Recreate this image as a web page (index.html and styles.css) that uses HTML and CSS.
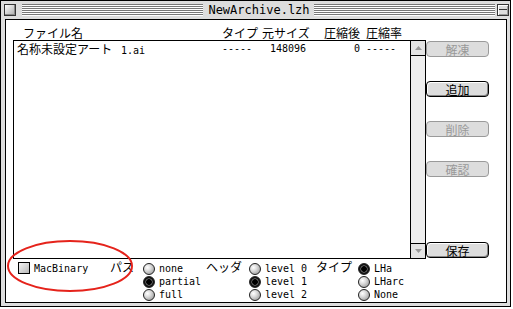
FILE: index.html
```html
<!DOCTYPE html>
<html lang="ja">
<head>
<meta charset="UTF-8">
<meta name="viewport" content="width=device-width, initial-scale=1.0">
<title>NewArchive.lzh</title>
<link rel="stylesheet" href="styles.css">
</head>
<body>
<div class="window">
  <div class="titlebar">
    <span class="closebox"></span>
    <span class="stripes"></span>
    <span class="title">NewArchive.lzh</span>
    <span class="stripes"></span>
    <span class="zoombox"></span>
  </div>

  <div class="content">
    <div class="cols header">
      <span>ファイル名</span>
      <span>タイプ</span>
      <span>元サイズ</span>
      <span>圧縮後</span>
      <span>圧縮率</span>
    </div>

    <div class="main">
      <div class="listbox">
        <div class="list">
          <div class="cols row">
            <span>名称未設定アート <span class="mono">1.ai</span></span>
            <span class="mono">-----</span>
            <span class="mono num">148096</span>
            <span class="mono num">0</span>
            <span class="mono">-----</span>
          </div>
        </div>
        <div class="scrollbar">
          <div class="arrow up">
            <svg width="7" height="4" viewBox="0 0 7 4"><polygon points="3.5,0 7,4 0,4" fill="#999"/></svg>
          </div>
          <div class="track"></div>
          <div class="arrow down">
            <svg width="7" height="4" viewBox="0 0 7 4"><polygon points="0,0 7,0 3.5,4" fill="#999"/></svg>
          </div>
        </div>
      </div>

      <div class="buttons">
        <button class="btn" disabled>解凍</button>
        <button class="btn">追加</button>
        <button class="btn" disabled>削除</button>
        <button class="btn" disabled>確認</button>
        <button class="btn last">保存</button>
      </div>
    </div>

    <div class="options">
      <label class="check"><span class="box"></span><span class="mono">MacBinary</span></label>

      <span class="group-label">パス</span>
      <div class="radios">
        <div class="radio"><span class="dot"></span><span class="mono">none</span></div>
        <div class="radio"><span class="dot on"></span><span class="mono">partial</span></div>
        <div class="radio"><span class="dot"></span><span class="mono">full</span></div>
      </div>

      <span class="group-label">ヘッダ</span>
      <div class="radios">
        <div class="radio"><span class="dot"></span><span class="mono">level 0</span></div>
        <div class="radio"><span class="dot on"></span><span class="mono">level 1</span></div>
        <div class="radio"><span class="dot"></span><span class="mono">level 2</span></div>
      </div>

      <span class="group-label">タイプ</span>
      <div class="radios">
        <div class="radio"><span class="dot on"></span><span class="mono">LHa</span></div>
        <div class="radio"><span class="dot"></span><span class="mono">LHarc</span></div>
        <div class="radio"><span class="dot"></span><span class="mono">None</span></div>
      </div>
    </div>
  </div>

  <!-- red mark drawn over the window -->
  <svg class="mark" width="130" height="56" viewBox="0 0 130 56">
    <ellipse cx="64" cy="27" rx="62" ry="25" fill="none" stroke="#e5231b" stroke-width="2"/>
  </svg>
</div>
</body>
</html>
```

FILE: styles.css
```css
body {
  margin: 0;
  background: #fff;
  font-family: "Noto Sans CJK JP", sans-serif;
  font-size: 12px;
  color: #000;
}
.mono {
  font-family: "DejaVu Sans Mono", monospace;
  font-size: 10px;
}
.window {
  position: relative; /* para la marca roja */
  box-sizing: border-box;
  width: 511px;
  height: 307px;
  border: 1px solid #000;
  background: #dddddd;
  padding: 0 3px 3px 4px;
}

/* barra de titulo */
.titlebar {
  display: flex;
  align-items: flex-start;
  height: 18px;
  margin: 0 -2px 0 -1px;
  padding: 3px 0 0 0;
  box-sizing: border-box;
}
.closebox, .zoombox {
  box-sizing: border-box;
  width: 12px;
  height: 12px;
  border: 1px solid #333;
  flex: none;
}
.closebox {
  background: linear-gradient(135deg, #fff, #aaa);
  box-shadow: inset -1px -1px #888;
}
.zoombox {
  background:
    linear-gradient(#333, #333) 0 4px / 100% 1px no-repeat,
    #ddd;
  box-shadow: inset 1px 1px #fff, inset -1px -1px #999;
}
.stripes {
  flex: 1;
  height: 12px;
  margin: 0 5px 0 6px;
  background: repeating-linear-gradient(to bottom, #777 0 1px, #fff 1px 2px);
}
.stripes + .title + .stripes {
  margin: 0 2px 0 4px;
}
.title {
  font-family: "DejaVu Sans Mono", monospace;
  font-size: 12px;
  line-height: 12px;
  margin-top: 0;
}

/* area de contenido */
.content {
  box-sizing: border-box;
  height: 284px;
  border: 1px solid #000;
  background: #fff;
}
.cols {
  display: grid;
  white-space: nowrap;
}
.header {
  box-sizing: border-box;
  height: 20px;
  padding: 6px 0 0 17px;
  line-height: 13px;
  grid-template-columns: 199px 40px 62px 42px auto;
}
.main {
  display: flex;
  height: 219px;
  padding-left: 7px;
}
.listbox {
  box-sizing: border-box;
  width: 413px;
  border: 1px solid #000;
  display: flex;
}
.list {
  flex: 1;
}
.row {
  padding: 1px 0 0 3px;
  line-height: 13px;
  grid-template-columns: 205px 40px 44px 54px auto;
  column-gap: 0;
}
.row .num {
  text-align: right;
}
.row span:last-child {
  padding-left: 6px;
}
.scrollbar {
  width: 15px;
  box-sizing: border-box;
  border-left: 1px solid #000;
  display: flex;
  flex-direction: column;
  background: #eeeeee;
}
.arrow {
  height: 15px;
  box-sizing: border-box;
  display: flex;
  align-items: center;
  justify-content: center;
  background: #e4e4e4;
}
.arrow.up { border-bottom: 1px solid #000; }
.arrow.down { border-top: 1px solid #000; }
.track { flex: 1; }

/* botones */
.buttons {
  display: flex;
  flex-direction: column;
  gap: 24px;
  padding: 1px 0 1px 0;
}
.btn {
  box-sizing: border-box;
  width: 63px;
  height: 16px;
  padding: 0;
  border: 1px solid #000;
  border-radius: 4px;
  background: #dddddd;
  box-shadow: inset 1px 1px #fff, inset -1px -1px #888;
  font-family: "Noto Sans CJK JP", sans-serif;
  font-size: 12px;
  line-height: 13px;
  color: #000;
}
.btn:disabled {
  border-color: #9a9a9a;
  color: #999;
  box-shadow: none;
}
.btn.last {
  margin-top: auto;
}

/* opciones de abajo */
.options {
  display: grid;
  grid-template-columns: 92px 33px 63px 43px 67px 42px auto;
  padding: 4px 0 0 12px;
  height: 43px;
  box-sizing: border-box;
}
.check {
  display: flex;
  align-items: center;
  gap: 4px;
  height: 12px;
  margin-top: -1px;
}
.box {
  box-sizing: border-box;
  width: 12px;
  height: 12px;
  border: 1px solid #000;
  background: linear-gradient(135deg, #f4f4f4, #b8b8b8);
}
.group-label {
  line-height: 12px;
  margin-top: -2px;
}
.radios {
  display: flex;
  flex-direction: column;
  gap: 1px;
}
.radio {
  display: flex;
  align-items: center;
  gap: 4px;
  height: 12px;
  line-height: 12px;
}
.dot {
  box-sizing: border-box;
  width: 12px;
  height: 12px;
  border-radius: 50%;
  border: 1px solid #222;
  background: radial-gradient(circle at 35% 35%, #fff 0, #ddd 35%, #8a8a8a 100%);
  flex: none;
}
.dot.on {
  background: radial-gradient(circle, #000 0 2.5px, #555 3px 3.5px, #111 4px);
}

.mark {
  position: absolute;
  left: 5px;
  top: 238px;
}
```
